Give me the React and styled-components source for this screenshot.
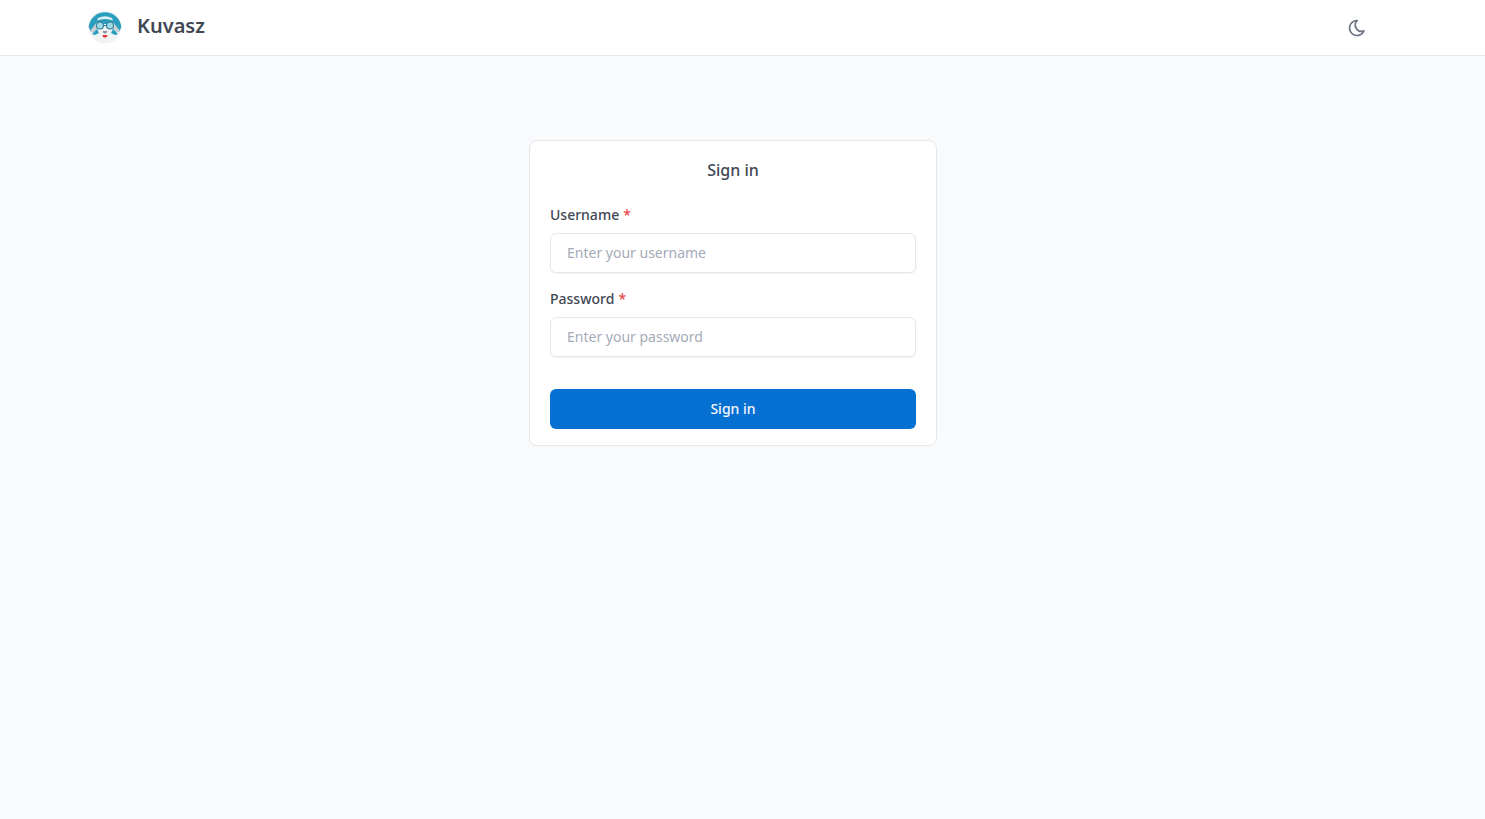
import React from 'react';
import styled, { createGlobalStyle } from 'styled-components';
import { TbMoon } from 'react-icons/tb';

const GlobalStyle = createGlobalStyle`
	* {
		box-sizing: border-box;
	}
	body {
		margin: 0;
		background: #f9fafb;
		font-family: 'Noto Sans', sans-serif;
		color: #374151;
	}
`;

const Page = styled.div`
	min-height: 819px;
	background: #f9fafb;
`;

const Header = styled.header`
	display: flex;
	justify-content: space-between;
	align-items: center;
	height: 56px;
	padding: 0 118px 0 88px;
	background: #fff;
	border-bottom: 1px solid #e5e7eb;
`;

const Brand = styled.div`
	display: flex;
	align-items: center;
	gap: 15px;
	margin-top: -1px;
`;

const BrandName = styled.span`
	margin-top: -2px;
	font-size: 20px;
	font-weight: 600;
	line-height: 28px;
	color: #404854;
`;

const ThemeToggle = styled.button`
	display: flex;
	padding: 0;
	border: 0;
	background: none;
	color: #6b7280;
	font-size: 20px;
	cursor: pointer;
`;

const Main = styled.main`
	display: flex;
	justify-content: center;
	padding: 84px 19px 0 0;
`;

const Card = styled.form`
	width: 408px;
	padding: 16px 20px;
	background: #fff;
	border: 1px solid #e5e7eb;
	border-radius: 8px;
`;

const Title = styled.h1`
	margin: 0 0 22px;
	font-size: 16px;
	font-weight: 500;
	line-height: 26px;
	text-align: center;
	color: #404854;
`;

const Field = styled.div`
	margin-bottom: 16px;
`;

const Label = styled.label`
	display: block;
	margin-bottom: 8px;
	font-size: 14px;
	font-weight: 500;
	line-height: 20px;
	color: #404854;
`;

const Required = styled.span`
	margin-left: 0.5px;
	color: #e5484d;
`;

const Input = styled.input`
	display: block;
	width: 100%;
	height: 40px;
	padding: 0 16px 2px;
	background: #fff;
	border: 1px solid #e5e7eb;
	border-radius: 6px;
	box-shadow: 0 1px 2px rgba(0, 0, 0, 0.05);
	font-family: inherit;
	font-size: 14px;
	color: #374151;
	&::placeholder {
		color: #a3abb8;
		opacity: 1;
	}
`;

const SubmitButton = styled.button`
	display: block;
	width: 100%;
	height: 40px;
	margin-top: 32px;
	padding: 0 0 2px;
	background: #0770d3;
	border: 0;
	border-radius: 6px;
	font-family: inherit;
	font-size: 14px;
	font-weight: 500;
	color: #f3f6fb;
	cursor: pointer;
`;

function Logo() {
	return (
		<svg width="34" height="34" viewBox="0 0 34 34" aria-hidden="true">
			<circle cx="17" cy="17" r="16.5" fill="#f1f2f3" />
			<path d="M0.6 17A16.5 16.5 0 0 1 33.4 17L31 22 25 14 9 14 3 22Z" fill="#2a9fbd" />
			<path d="M10 8Q17 4.5 24 8L25 10.5Q17 7.5 9 10.5Z" fill="#d9edf2" />
			<path d="M2 21L9 12 13 14 7 23Z" fill="#c9ced6" />
			<path d="M32 21L25 12 21 14 27 23Z" fill="#c9ced6" />
			<path d="M4 24L9 19 11 23 7 25Z" fill="#2a9fbd" />
			<path d="M30 24L25 19 23 23 27 25Z" fill="#2a9fbd" />
			<circle cx="12" cy="15.5" r="3.5" fill="#9ddbe6" stroke="#2f7f96" strokeWidth="1.1" />
			<circle cx="22" cy="15.5" r="3.5" fill="#9ddbe6" stroke="#2f7f96" strokeWidth="1.1" />
			<path d="M15.5 15.5h3" stroke="#2f7f96" strokeWidth="1.1" />
			<path d="M15 21h4v1.5l-2 1.2-2-1.2Z" fill="#8a93a3" />
			<path d="M14.6 25h4.8q0 2.6-2.4 2.6T14.6 25Z" fill="#e5333f" />
		</svg>
	);
}

export default function App() {
	return (
		<Page>
			<GlobalStyle />
			<Header>
				<Brand>
					<Logo />
					<BrandName>Kuvasz</BrandName>
				</Brand>
				<ThemeToggle type="button" aria-label="Toggle theme">
					<TbMoon />
				</ThemeToggle>
			</Header>
			<Main>
				<Card onSubmit={(e) => e.preventDefault()}>
					<Title>Sign in</Title>
					<Field>
						<Label htmlFor="username">
							Username <Required>*</Required>
						</Label>
						<Input id="username" placeholder="Enter your username" />
					</Field>
					<Field>
						<Label htmlFor="password">
							Password <Required>*</Required>
						</Label>
						<Input id="password" type="password" placeholder="Enter your password" />
					</Field>
					<SubmitButton type="submit">Sign in</SubmitButton>
				</Card>
			</Main>
		</Page>
	);
}
